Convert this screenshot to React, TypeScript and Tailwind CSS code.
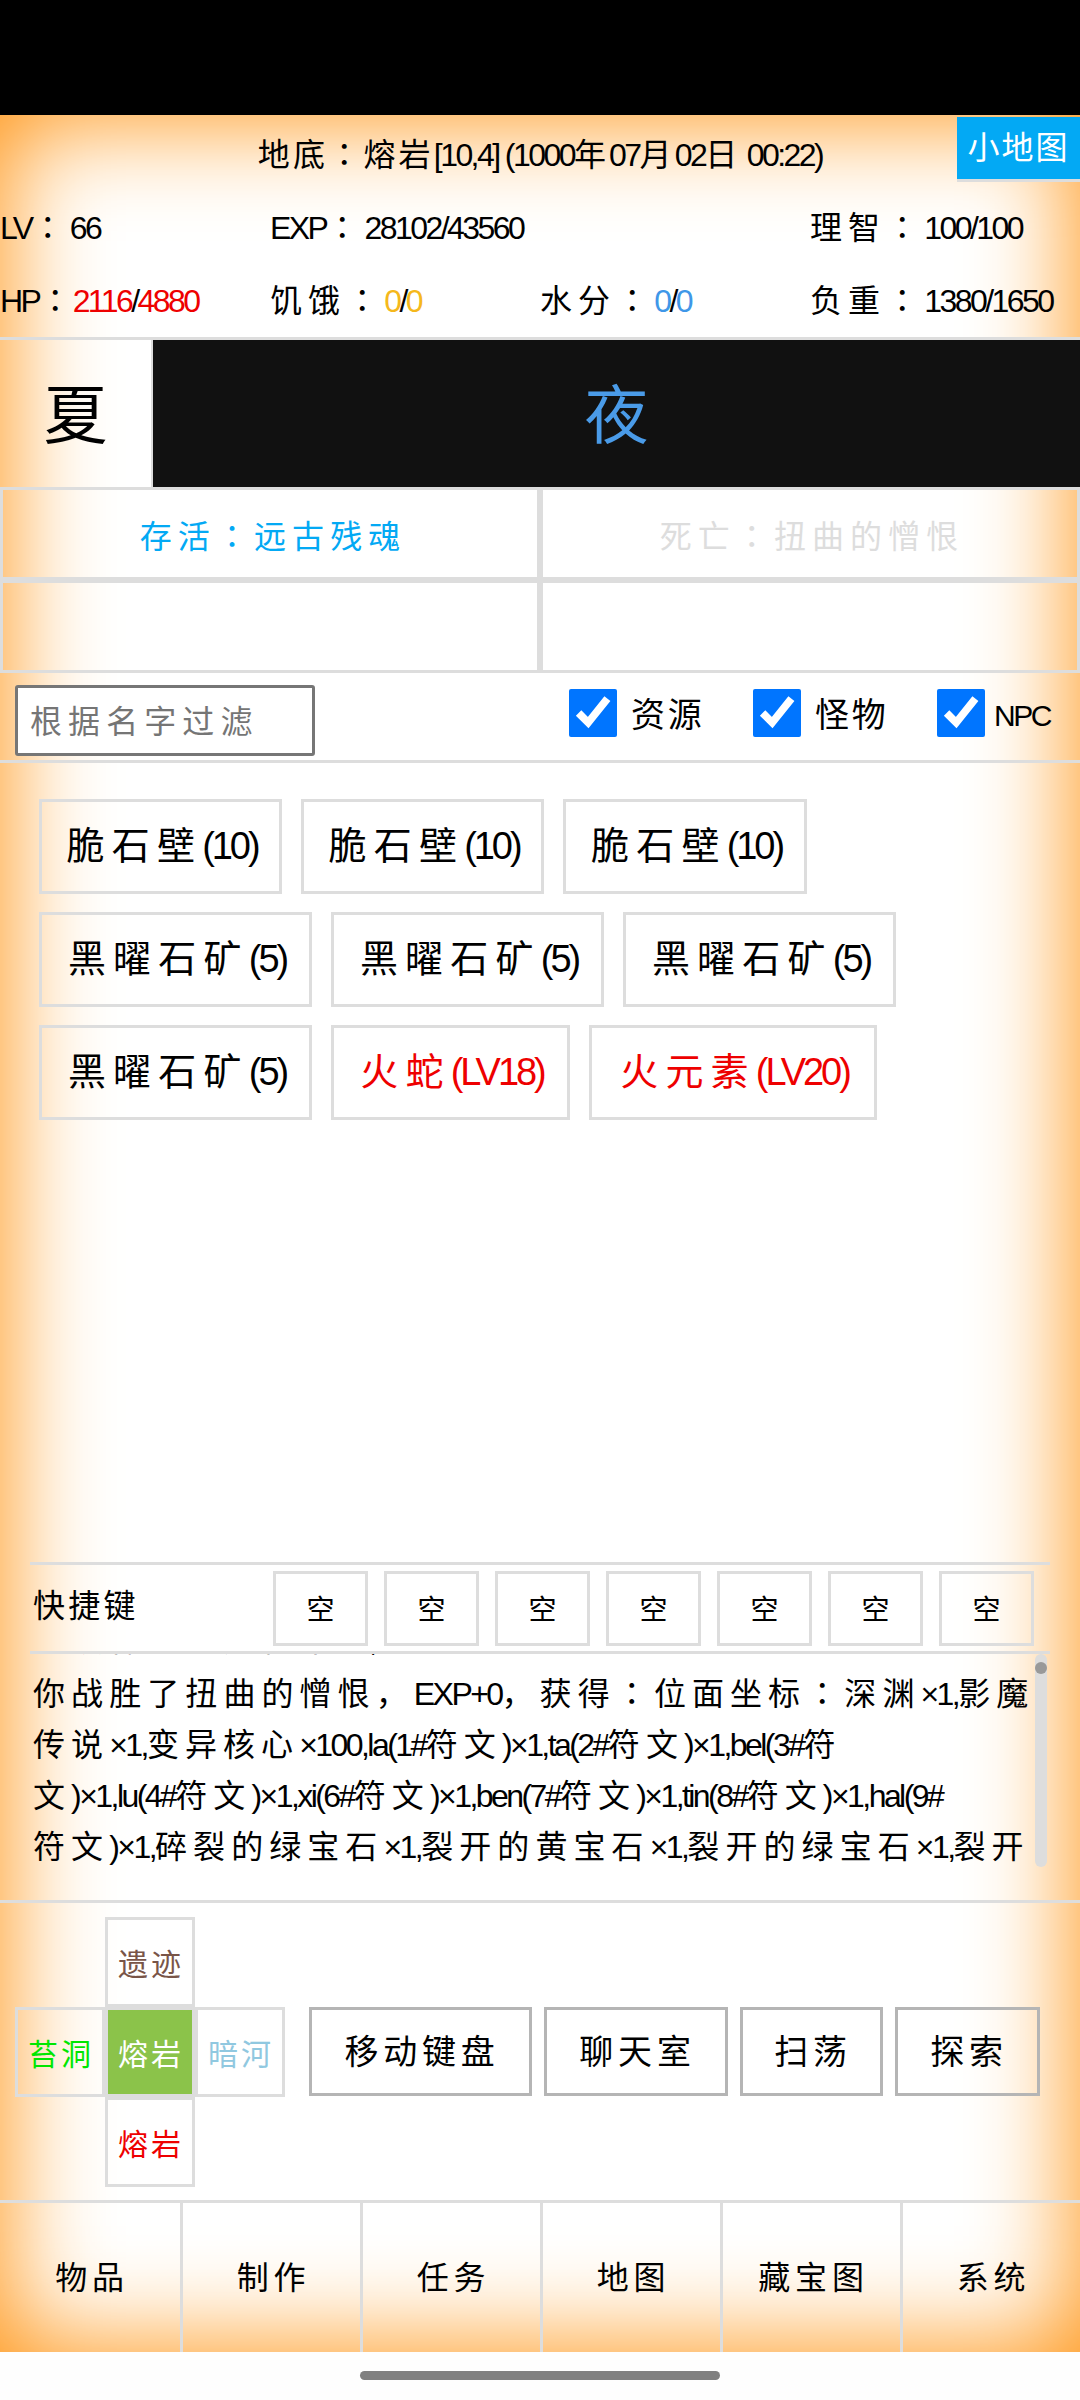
import React from "react";

const base = "font-['Liberation_Sans','Noto_Sans_CJK_SC',sans-serif]";

// the reference font sets han wide and latin very narrow, so each run gets its own tracking
function T({ s, gap = "tracking-[0.19em]" }: { s: string; gap?: string }) {
  const parts = s.split(/(：|[\u4e00-\u9fff，]+)/).filter(Boolean);
  return (
    <>
      {parts.map((p, i) =>
        p === "：" ? (
          <span key={i} className={"font-['Noto_Sans_CJK_TC',sans-serif] " + gap}>
            {p}
          </span>
        ) : /[\u4e00-\u9fff，]/.test(p) ? (
          <span key={i} className={gap}>
            {p}
          </span>
        ) : (
          <span key={i} className="tracking-[-0.08em]">
            {p}
          </span>
        ),
      )}
    </>
  );
}

function Chip({ label, w, red }: { label: string; w: string; red?: boolean }) {
  return (
    <div
      className={
        "h-[95px] border-[3px] border-[#dddddd] flex items-center justify-center pl-[3px] text-[38px] whitespace-nowrap " +
        w +
        (red ? " text-[#ee0000]" : " text-black")
      }
    >
      <div>
        <T s={label} />
      </div>
    </div>
  );
}

function Check({ label, size = "w-[184px] text-[34px] gap-[14px]" }: { label: string; size?: string }) {
  return (
    <label className={"h-[48px] flex items-center whitespace-nowrap " + size}>
      <input type="checkbox" defaultChecked className="w-[48px] h-[48px] m-0" />
      <span className="pt-[4px]">
        <T s={label} gap="tracking-[0.08em]" />
      </span>
    </label>
  );
}

function Dir({ label, color, on }: { label: string; color: string; on?: boolean }) {
  return (
    <div
      className={
        "w-[90px] h-[90px] border-[3px] border-[#dddddd] flex items-center justify-center pt-[5px] pl-[2px] text-[30px] " +
        color +
        (on ? " bg-[#8bc34a]" : "")
      }
    >
      <div>
        <T s={label} gap="tracking-[0.1em]" />
      </div>
    </div>
  );
}

function Action({ label, w }: { label: string; w: string }) {
  return (
    <div className={"h-[89px] border-[3px] border-[#b5b5b5] flex items-center justify-center pl-[3px] pt-[1px] text-[34px] " + w}>
      <div>
        <T s={label} gap="tracking-[0.14em]" />
      </div>
    </div>
  );
}

const items: { label: string; w: string; red?: boolean }[] = [
  { label: "脆石壁(10)", w: "w-[243px]" },
  { label: "脆石壁(10)", w: "w-[243px]" },
  { label: "脆石壁(10)", w: "w-[244px]" },
  { label: "黑曜石矿(5)", w: "w-[273px]" },
  { label: "黑曜石矿(5)", w: "w-[273px]" },
  { label: "黑曜石矿(5)", w: "w-[273px]" },
  { label: "黑曜石矿(5)", w: "w-[273px]" },
  { label: "火蛇(LV18)", w: "w-[239px]", red: true },
  { label: "火元素(LV20)", w: "w-[288px]", red: true },
];

const log = [
  "你获得了符文精华×1,药水×1",
  "你战胜了扭曲的憎恨，EXP+0，获得：位面坐标：深渊×1,影魔",
  "传说×1,变异核心×100,la(1#符文)×1,ta(2#符文)×1,bel(3#符",
  "文)×1,lu(4#符文)×1,xi(6#符文)×1,ben(7#符文)×1,tin(8#符文)×1,hal(9#",
  "符文)×1,碎裂的绿宝石×1,裂开的黄宝石×1,裂开的绿宝石×1,裂开",
];

export default function App() {
  return (
    <div className={"w-[1080px] h-[2400px] bg-[#fefefe] flex flex-col text-black " + base}>
      <div className="h-[115px] bg-black shrink-0"></div>

      <div className="h-[2237px] flex flex-col bg-white shadow-[inset_0_0_100px_6px_#ff9515]">
        {/* status */}
        <div className="h-[225px] border-b-[3px] border-[#dddddd] flex flex-col text-[32px] shrink-0">
          <div className="h-[76px] grid grid-cols-[123px_1fr_123px] items-start">
            <div></div>
            <div className="h-[76px] flex items-center justify-center whitespace-nowrap">
              <div>
                <T s="地底：熔岩[10,4] (1000年07月02日 00:22)" gap="tracking-[0.1em]" />
              </div>
            </div>
            <div className="mt-[2px] h-[65px] bg-[#03a9f4] border-b-[3px] border-[#dddddd] text-white flex items-center justify-center">
              <div>
                <T s="小地图" gap="tracking-[0.06em]" />
              </div>
            </div>
          </div>
          <div className="h-[70px] grid grid-cols-4 items-center whitespace-nowrap">
            <div>
              <T s="LV：66" />
            </div>
            <div>
              <T s="EXP：28102/43560" />
            </div>
            <div className="col-start-4">
              <T s="理智：100/100" />
            </div>
          </div>
          <div className="h-[76px] grid grid-cols-4 items-center whitespace-nowrap">
            <div>
              <T s="HP：" gap="tracking-[0.04em]" />
              <span className="text-[#ee0000]">
                <T s="2116" />
              </span>
              <T s="/" />
              <span className="text-[#ee0000]">
                <T s="4880" />
              </span>
            </div>
            <div>
              <T s="饥饿：" />
              <span className="text-[#f5b81c]">
                <T s="0" />
              </span>
              <T s="/" />
              <span className="text-[#f5b81c]">
                <T s="0" />
              </span>
            </div>
            <div>
              <T s="水分：" />
              <span className="text-[#3f97e8]">
                <T s="0" />
              </span>
              <T s="/" />
              <span className="text-[#3f97e8]">
                <T s="0" />
              </span>
            </div>
            <div>
              <T s="负重：1380/1650" />
            </div>
          </div>
        </div>

        {/* day / night */}
        <div className="h-[147px] flex text-[64px] shrink-0">
          <div className="w-[153px] flex items-center justify-center pt-[4px] border-r-[2px] border-[#dddddd]">夏</div>
          <div className="flex-1 bg-[#111111] text-[#4a9be8] flex items-center justify-center pt-[4px]">夜</div>
        </div>

        {/* battle state */}
        <div className="grid grid-cols-2 grid-rows-2 h-[186px] shrink-0">
          <div className="border-[3px] border-[#dddddd] flex items-center justify-center pl-[6px] pt-[4px] text-[32px] text-[#03a9f4]">
            <div>
              <T s="存活：远古残魂" />
            </div>
          </div>
          <div className="border-[3px] border-[#dddddd] flex items-center justify-center pl-[4px] pt-[4px] text-[32px] text-[#dddddd]">
            <div>
              <T s="死亡：扭曲的憎恨" />
            </div>
          </div>
          <div className="border-[3px] border-[#dddddd]"></div>
          <div className="border-[3px] border-[#dddddd]"></div>
        </div>

        {/* filter */}
        <div className="h-[90px] border-b-[3px] border-[#dddddd] flex items-start pl-[15px] shrink-0">
          <input
            placeholder="根据名字过滤"
            className="mt-[12px] w-[300px] h-[71px] border-[3px] border-[#767676] rounded-[3px] px-[12px] pt-[4px] text-[32px] tracking-[0.19em] bg-white placeholder:text-[#757575]"
          />
          <div className="ml-[254px] mt-[16px] flex items-center">
            <Check label="资源" />
            <Check label="怪物" />
            <Check label="NPC" size="w-[144px] text-[30px] gap-[9px]" />
          </div>
        </div>

        {/* nearby */}
        <div className="flex-1 flex flex-wrap content-start gap-x-[19px] gap-y-[18px] pl-[39px] pr-[150px] pt-[36px]">
          {items.map((it, i) => (
            <Chip key={i} label={it.label} w={it.w} red={it.red} />
          ))}
        </div>

        {/* hotkeys */}
        <div className="mx-[30px] h-[92px] border-y-[3px] border-[#dddddd] flex items-center shrink-0">
          <div className="w-[243px] pl-[3px] pb-[4px] text-[32px]">
            <T s="快捷键" gap="tracking-[0.1em]" />
          </div>
          <div className="flex gap-[16px]">
            {[0, 1, 2, 3, 4, 5, 6].map((i) => (
              <div key={i} className="w-[95px] h-[75px] border-[3px] border-[#dddddd] flex items-center justify-center pt-[6px] text-[28px]">
                空
              </div>
            ))}
          </div>
        </div>

        {/* log */}
        <div className="h-[213px] ml-[33px] mr-[33px] flex shrink-0">
          <div className="flex-1 min-w-0 overflow-hidden flex flex-col justify-end text-[32px] leading-[51px] whitespace-nowrap">
            <div className="shrink-0 mb-[-6px]">
              {log.map((l, i) => (
                <div key={i}>
                  <T s={l} />
                </div>
              ))}
            </div>
          </div>
          <div className="w-[12px] bg-[#dddddd] rounded-full pt-[8px] shrink-0">
            <div className="h-[12px] bg-[#999999] rounded-full"></div>
          </div>
        </div>

        <div className="h-[36px] border-b-[3px] border-[#dddddd] shrink-0"></div>

        {/* map + actions */}
        <div className="h-[300px] border-b-[3px] border-[#dddddd] flex items-center pl-[15px] pr-[40px] shrink-0">
          <div className="w-[270px] grid grid-cols-3 shrink-0">
            <div></div>
            <Dir label="遗迹" color="text-[#795548]" />
            <div></div>
            <Dir label="苔洞" color="text-[#00e600]" />
            <Dir label="熔岩" color="text-white" on />
            <Dir label="暗河" color="text-[#90c8e0]" />
            <div></div>
            <Dir label="熔岩" color="text-[#ee0000]" />
            <div></div>
          </div>
          <div className="flex-1 flex justify-end gap-[12px]">
            <Action label="移动键盘" w="w-[223px]" />
            <Action label="聊天室" w="w-[184px]" />
            <Action label="扫荡" w="w-[143px]" />
            <Action label="探索" w="w-[145px]" />
          </div>
        </div>

        {/* bottom nav */}
        <div className="h-[149px] grid grid-cols-6 text-[32px] shrink-0">
          {["物品", "制作", "任务", "地图", "藏宝图", "系统"].map((n, i) => (
            <div key={n} className={"flex items-center justify-center pl-[4px] " + (i > 0 ? "border-l-[3px] border-[#dddddd]" : "")}>
              <div>
                <T s={n} gap="tracking-[0.15em]" />
              </div>
            </div>
          ))}
        </div>
      </div>

      {/* gesture bar */}
      <div className="flex-1 flex items-center justify-center pb-[1px]">
        <div className="w-[360px] h-[9px] rounded-full bg-[#808080]"></div>
      </div>
    </div>
  );
}
